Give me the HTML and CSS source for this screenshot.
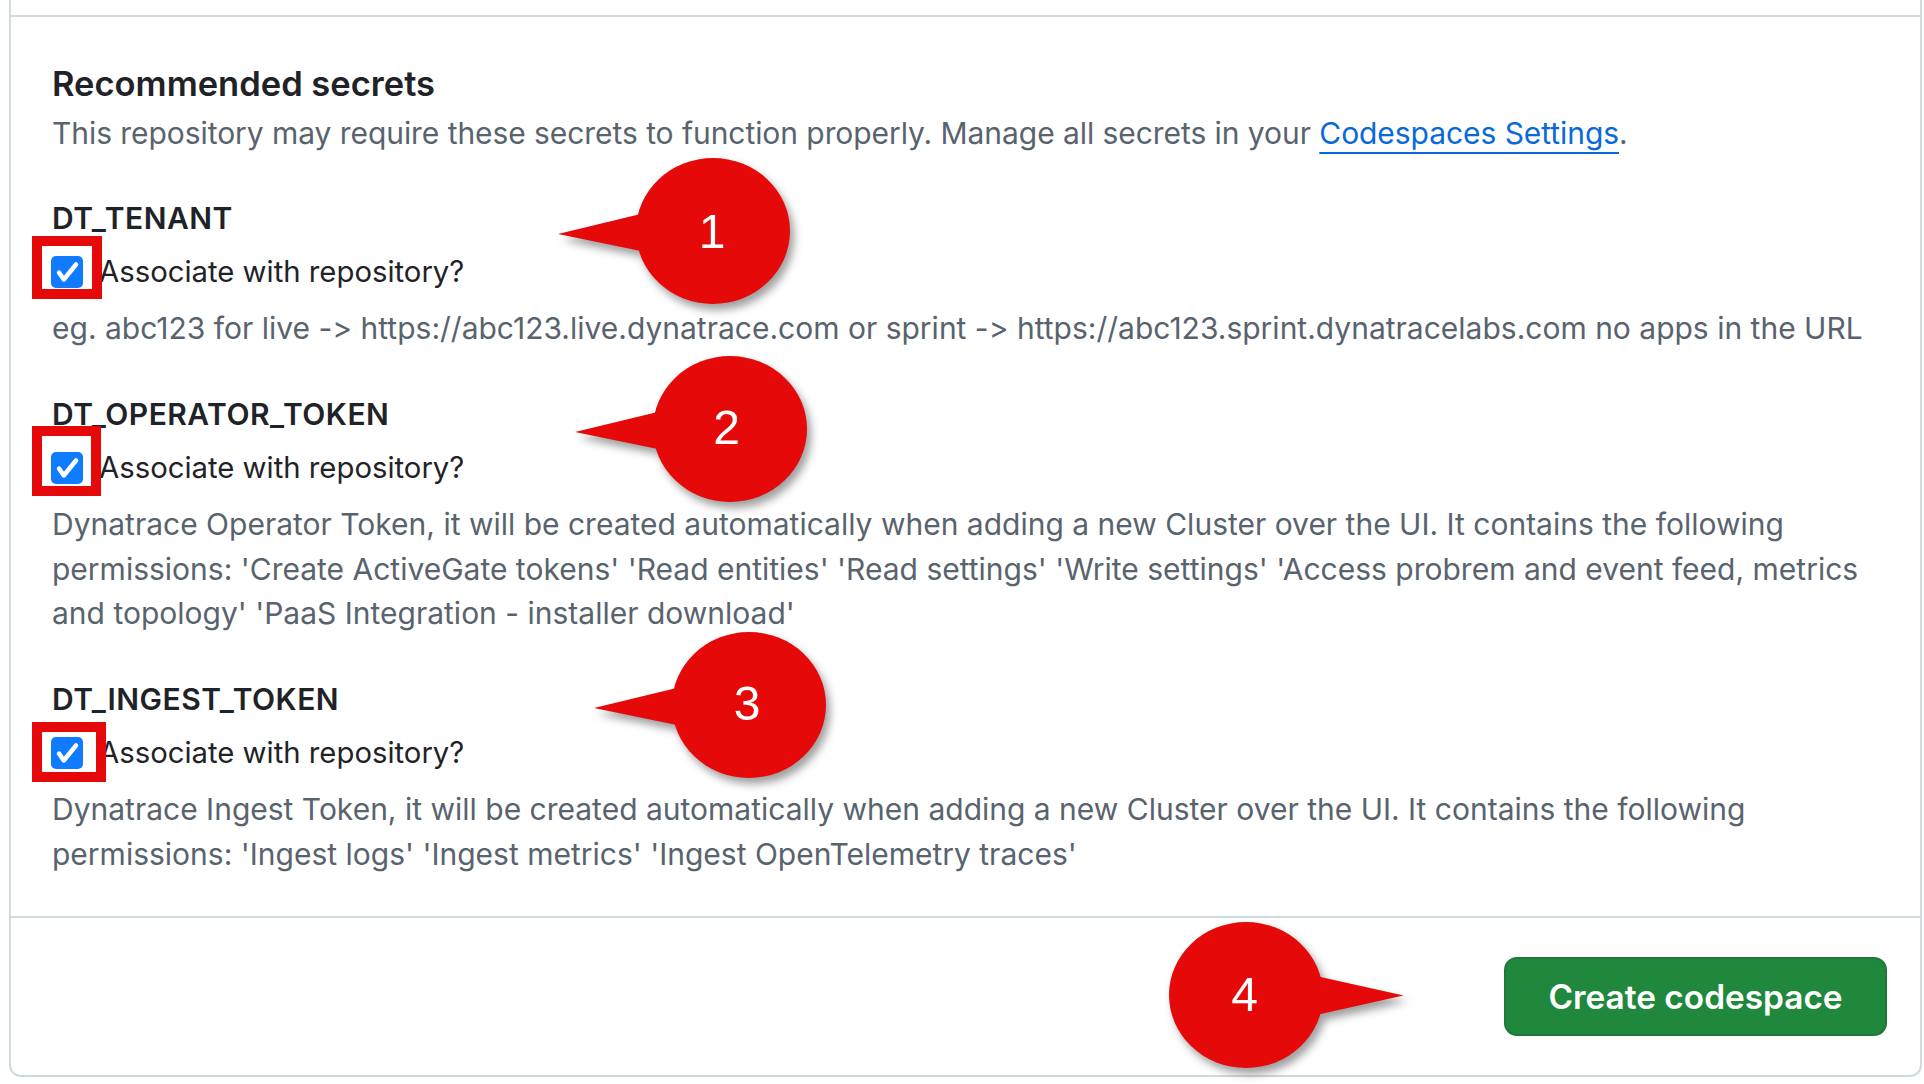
FILE: index.html
```html
<!DOCTYPE html>
<html lang="en">
<head>
<meta charset="utf-8">
<title>Recommended secrets</title>
<link rel="stylesheet" href="styles.css">
</head>
<body>
<div class="page">
  <div class="card">
    <div class="card-top"></div>
    <section class="secrets">
      <h3 class="title">Recommended secrets</h3>
      <p class="lead">This repository may require these secrets to function properly. Manage all secrets in your <a href="#">Codespaces Settings</a>.</p>

      <div class="secret">
        <div class="secret-name">DT_TENANT</div>
        <label class="assoc">
          <span class="cb"><svg viewBox="0 0 32 32" width="32" height="32"><rect width="32" height="32" rx="5" fill="#0f7bff"/><path d="M8 16.5 L12.8 23.5 L25 8.5" fill="none" stroke="#fff" stroke-width="4.5" stroke-linecap="round" stroke-linejoin="round"/></svg></span>
          <span>Associate with repository?</span>
          <span class="mark mark-1"></span>
        </label>
        <p class="secret-desc">eg. abc123 for live -&gt; https://abc123.live.dynatrace.com or sprint -&gt; https://abc123.sprint.dynatracelabs.com no apps in the URL</p>
      </div>

      <div class="secret">
        <div class="secret-name">DT_OPERATOR_TOKEN</div>
        <label class="assoc">
          <span class="cb"><svg viewBox="0 0 32 32" width="32" height="32"><rect width="32" height="32" rx="5" fill="#0f7bff"/><path d="M8 16.5 L12.8 23.5 L25 8.5" fill="none" stroke="#fff" stroke-width="4.5" stroke-linecap="round" stroke-linejoin="round"/></svg></span>
          <span>Associate with repository?</span>
          <span class="mark mark-2"></span>
        </label>
        <p class="secret-desc">Dynatrace Operator Token, it will be created automatically when adding a new Cluster over the UI. It contains the following permissions: 'Create ActiveGate tokens' 'Read entities' 'Read settings' 'Write settings' 'Access probrem and event feed, metrics and topology' 'PaaS Integration - installer download'</p>
      </div>

      <div class="secret">
        <div class="secret-name">DT_INGEST_TOKEN</div>
        <label class="assoc">
          <span class="cb"><svg viewBox="0 0 32 32" width="32" height="32"><rect width="32" height="32" rx="5" fill="#0f7bff"/><path d="M8 16.5 L12.8 23.5 L25 8.5" fill="none" stroke="#fff" stroke-width="4.5" stroke-linecap="round" stroke-linejoin="round"/></svg></span>
          <span>Associate with repository?</span>
          <span class="mark mark-3"></span>
        </label>
        <p class="secret-desc">Dynatrace Ingest Token, it will be created automatically when adding a new Cluster over the UI. It contains the following permissions: 'Ingest logs' 'Ingest metrics' 'Ingest OpenTelemetry traces'</p>
      </div>
    </section>
    <div class="card-footer">
      <button class="btn-primary" type="button">Create codespace</button>
    </div>
  </div>

  <svg class="callout callout-1" viewBox="0 0 250 165" width="250" height="165">
    <polygon points="15,81 110,58 110,100.5" fill="#e50909"/>
    <ellipse cx="170" cy="78" rx="77" ry="73" fill="#e50909"/>
    <text x="169" y="95" text-anchor="middle" class="callout-num">1</text>
  </svg>
  <svg class="callout callout-2" viewBox="0 0 250 165" width="250" height="165">
    <polygon points="15,81 110,58 110,100.5" fill="#e50909"/>
    <ellipse cx="170" cy="78" rx="77" ry="73" fill="#e50909"/>
    <text x="166.5" y="93" text-anchor="middle" class="callout-num">2</text>
  </svg>
  <svg class="callout callout-3" viewBox="0 0 250 165" width="250" height="165">
    <polygon points="15,81 110,58 110,100.5" fill="#e50909"/>
    <ellipse cx="170" cy="78" rx="77" ry="73" fill="#e50909"/>
    <text x="168" y="93" text-anchor="middle" class="callout-num">3</text>
  </svg>
  <svg class="callout callout-4" viewBox="0 0 250 165" width="250" height="165">
    <polygon points="237.5,78.5 140,56.8 140,100.2" fill="#e50909"/>
    <ellipse cx="80" cy="78" rx="77" ry="73" fill="#e50909"/>
    <text x="78.5" y="93.7" text-anchor="middle" class="callout-num">4</text>
  </svg>
</div>
</body>
</html>
```
FILE: styles.css
```css
* { box-sizing: border-box; }
html, body { margin: 0; padding: 0; background: #fff; }
body {
  font-family: Inter, "Liberation Sans", Arial, sans-serif;
  font-feature-settings: "calt" 0, "liga" 0;
  color: #1f2328;
  --fb: 30px;
  --lh: 44.8px;
}
.page { position: relative; width: 1924px; height: 1084px; overflow: hidden; }

.card {
  margin-left: 9px;
  width: 1913px;
  border: 2px solid #d1d9e0;
  border-top: 0;
  border-radius: 0 0 12px 12px;
}
.card-top { height: 17px; border-bottom: 2px solid #d1d9e0; }

.secrets { padding: 46px 41px 39.5px 41px; }
.title { margin: 0; font-size: 34.5px; font-weight: 600; line-height: 42px; color: #1f2328; }
.lead { margin: 5.5px 0 0; font-size: var(--fb); line-height: var(--lh); letter-spacing: -0.06px; color: #59636e; }
.lead a {
  color: #0969da;
  text-decoration: underline;
  text-decoration-thickness: 2px;
  text-underline-offset: 7.5px;
}

.secret { margin-top: 40.8px; }
.secret-name { font-size: var(--fb); line-height: var(--lh); font-weight: 600; letter-spacing: 0.5px; color: #1f2328; }
.assoc {
  position: relative;
  display: flex;
  align-items: center;
  gap: 16px;
  height: var(--lh);
  margin-top: 9px;
  font-size: 29.3px;
  line-height: var(--lh);
  color: #1f2328;
}
.cb { display: block; width: 32px; height: 32px; margin-left: -1px; }
.cb svg { display: block; }
.secret-desc { margin: 11.5px 0 0; font-size: var(--fb); line-height: var(--lh); color: #59636e; }

.mark { position: absolute; left: -19.6px; border: 10px solid #e50909; }
.mark-1 { top: -13.8px; width: 69.4px; height: 63px; }
.mark-2 { top: -19.5px; width: 69px; height: 69.7px; }
.mark-3 { top: -8.8px; width: 73.2px; height: 60px; }

.card-footer {
  border-top: 2px solid #d1d9e0;
  display: flex;
  justify-content: flex-end;
  padding: 39px 33px 39.5px;
}
.btn-primary {
  height: 78.5px;
  width: 383px;
  padding: 0;
  border: 2px solid rgba(31, 35, 40, 0.15);
  border-radius: 13px;
  background: #1f883d;
  color: #fff;
  font-family: inherit;
  font-feature-settings: "calt" 0;
  font-size: 33.4px;
  font-weight: 600;
}

.callout { position: absolute; overflow: visible; filter: drop-shadow(4px 6px 4px rgba(0, 0, 0, 0.38)); }
.callout-1 { left: 543px; top: 153px; }
.callout-2 { left: 559.5px; top: 351px; }
.callout-3 { left: 579px; top: 627px; }
.callout-4 { left: 1165.5px; top: 916.5px; }
.callout-num { font-family: "Liberation Sans", Arial, sans-serif; font-size: 48px; fill: #fff; }
```
